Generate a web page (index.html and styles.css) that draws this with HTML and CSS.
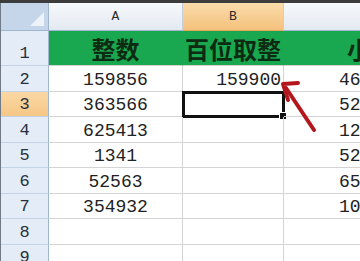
FILE: index.html
```html
<!DOCTYPE html>
<html lang="zh">
<head>
    <meta charset="UTF-8">
    <meta name="viewport" content="width=device-width, initial-scale=1.0">
    <title>百位取整</title>
    <link rel="stylesheet" href="styles.css">
</head>
<body>
    <div class="topbar"></div>
    <div class="sheet">
        <div class="corner"><span class="tri"></span></div>
        <div class="colhead">A</div>
        <div class="colhead active">B</div>
        <div class="colhead">C</div>

        <div class="rowhead">1</div>
        <div class="cell title">整数</div>
        <div class="cell title">百位取整</div>
        <div class="cell title wide">小数位</div>

        <div class="rowhead">2</div>
        <div class="cell">159856</div>
        <div class="cell right">159900</div>
        <div class="cell wide">4605.87</div>

        <div class="rowhead active">3</div>
        <div class="cell">363566</div>
        <div class="cell selected"><span class="handle"></span></div>
        <div class="cell wide">52.4471</div>

        <div class="rowhead">4</div>
        <div class="cell">625413</div>
        <div class="cell"></div>
        <div class="cell wide">12.0156</div>

        <div class="rowhead">5</div>
        <div class="cell">1341</div>
        <div class="cell"></div>
        <div class="cell wide">52.7712</div>

        <div class="rowhead">6</div>
        <div class="cell">52563</div>
        <div class="cell"></div>
        <div class="cell wide">65.1093</div>

        <div class="rowhead">7</div>
        <div class="cell">354932</div>
        <div class="cell"></div>
        <div class="cell wide">105.2381</div>

        <div class="rowhead">8</div>
        <div class="cell"></div>
        <div class="cell"></div>
        <div class="cell"></div>

        <div class="rowhead">9</div>
        <div class="cell"></div>
        <div class="cell"></div>
        <div class="cell"></div>
    </div>

    <svg class="arrow" width="360" height="261" viewBox="0 0 360 261">
        <line x1="286" y1="88" x2="314" y2="130" stroke="#b3171d" stroke-width="4" stroke-linecap="round"/>
        <polyline points="298,83 283,84 288,100" fill="none" stroke="#b3171d" stroke-width="4" stroke-linejoin="round" stroke-linecap="round"/>
    </svg>
</body>
</html>
```

FILE: styles.css
```css
body {
    margin: 0;
    width: 360px;
    height: 261px;
    overflow: hidden;
    background: #fff;
    position: relative;
    font-family: "Liberation Mono", monospace;
    color: #222;
}
.topbar {
    height: 3px;
    background: #3c3c3c;
}
.sheet {
    display: grid;
    grid-template-columns: 48px 134px 101px 200px;
    grid-template-rows: 28px 35px repeat(8, 25.5px);
    border-left: 1px solid #6f7a86;
}
.corner {
    background: #c5d5ea;
    border-right: 1px solid #9eb6ce;
    border-bottom: 1px solid #9eb6ce;
    position: relative;
}
.tri {
    position: absolute;
    right: 4px;
    bottom: 4px;
    width: 0;
    height: 0;
    border-left: 14px solid transparent;
    border-bottom: 14px solid #eef3fa;
}
.colhead {
    background: linear-gradient(#f7f9fc, #e3e9f1);
    border-right: 1px solid #c5d1df;
    border-bottom: 1px solid #9eb6ce;
    font-size: 13px;
    color: #2b2b2b;
    display: flex;
    align-items: center;
    justify-content: center;
}
.colhead.active {
    background: linear-gradient(#fadcab, #f4c17c);
    border-bottom-color: #e2a55a;
}
.rowhead {
    background: #e4ecf7;
    border-right: 1px solid #9eb6ce;
    border-bottom: 1px solid #c5d3e6;
    font-size: 17px;
    color: #27313d;
    display: flex;
    align-items: flex-end;
    justify-content: center;
    padding-bottom: 2px;
}
.rowhead.active {
    background: linear-gradient(#fad8a4, #f6c787);
}
.cell {
    border-right: 1px solid #d4d4d4;
    border-bottom: 1px solid #d4d4d4;
    font-size: 18px;
    display: flex;
    align-items: flex-end;
    justify-content: center;
    padding-bottom: 1px;
    position: relative;
    white-space: nowrap;
}
.cell.right {
    justify-content: flex-end;
    padding-right: 2px;
}
.cell.wide {
    justify-content: flex-start;
    padding-left: 55px;
}
.cell.title {
    background: #19a74f;
    border-right-color: #19a74f;
    border-bottom-color: #cfd6cf;
    font-family: "Noto Sans CJK SC", sans-serif;
    font-weight: bold;
    font-size: 24px;
    color: #0d2a12;
    align-items: center;
    padding-bottom: 0;
}
.cell.title.wide {
    padding-left: 63px;
}
.cell.selected {
    outline: 3px solid #111;
    outline-offset: -2px;
}
.handle {
    position: absolute;
    right: -4px;
    bottom: -4px;
    width: 6px;
    height: 6px;
    background: #111;
    border: 1px solid #fff;
}
.arrow {
    position: absolute;
    left: 0;
    top: 0;
}
```
